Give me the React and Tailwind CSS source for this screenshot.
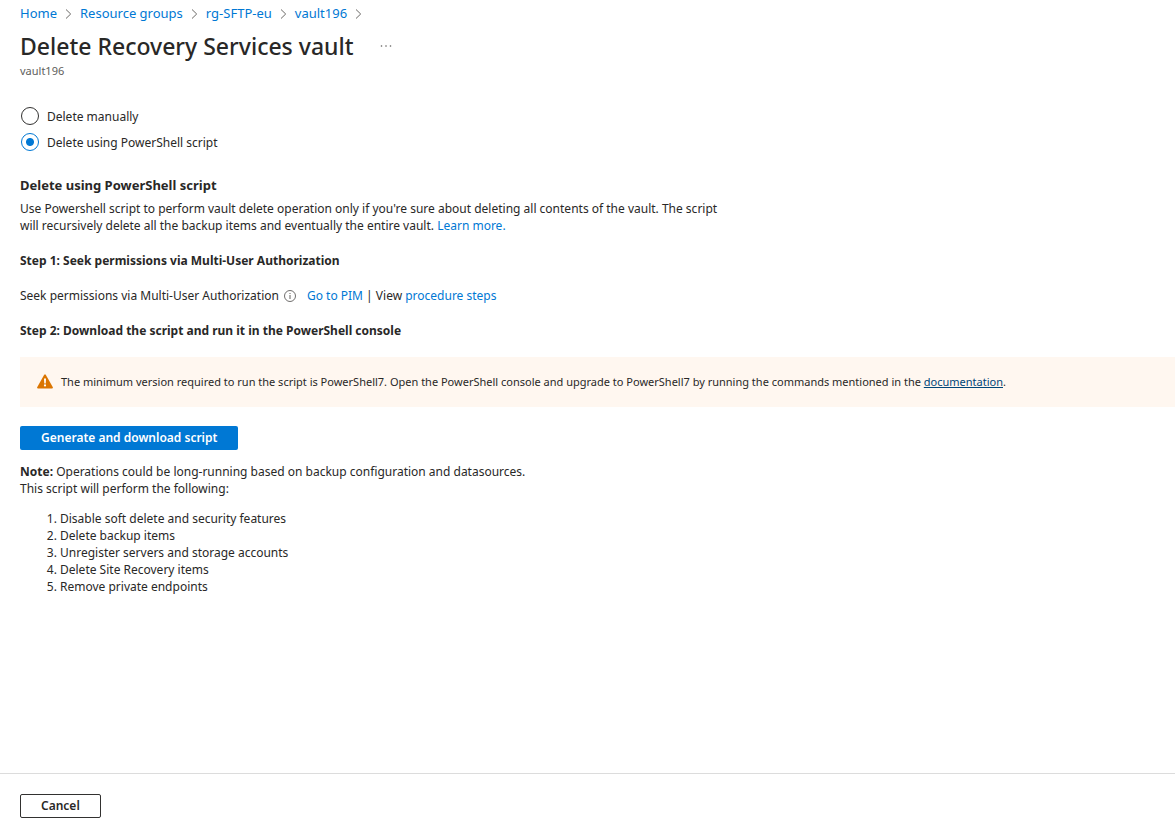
import { useState } from "react";

const crumbs = ["Home", "Resource groups", "rg-SFTP-eu", "vault196"];

const actions = [
  "Disable soft delete and security features",
  "Delete backup items",
  "Unregister servers and storage accounts",
  "Delete Site Recovery items",
  "Remove private endpoints",
];

const link = "text-[#0078d4] hover:underline";

function Chevron() {
  return (
    <svg className="mx-2 h-[10px] w-[7px]" viewBox="0 0 7 10" fill="none" stroke="#6b6967" aria-hidden="true">
      <path d="M1 0.5 5.7 5 1 9.5" />
    </svg>
  );
}

function InfoIcon() {
  return (
    <svg className="ml-[5px] mr-[11px] h-3 w-3" viewBox="0 0 12 12" fill="none" stroke="#605e5c" aria-hidden="true">
      <circle cx="6" cy="6" r="5.5" strokeWidth="0.9" />
      <path d="M6 5v4M6 3v1" strokeWidth="1" />
    </svg>
  );
}

function WarningIcon() {
  return (
    <svg className="mb-[2px] mr-2 h-[15px] w-4 shrink-0" viewBox="0 0 16 15" aria-hidden="true">
      <path
        d="M7.1 1.1Q8-.4 8.9 1.1L15.7 13Q16.500 14.500 14.900 14.500H1.100Q-.5 14.500.3 13Z"
        fill="#db7500"
      />
      <path d="M7 4.500h2l-.3 5H7.300Z" fill="#fff" />
      <circle cx="8" cy="11.400" r="1.100" fill="#fff" />
    </svg>
  );
}

function Radio({ label, value, selected, onSelect }) {
  return (
    <label className="flex h-[26px] items-center gap-2">
      <input
        type="radio"
        name="mode"
        value={value}
        checked={selected === value}
        onChange={() => onSelect(value)}
        className="m-0 h-[18px] w-[18px] shrink-0 appearance-none rounded-full border border-[#323130] bg-white checked:border-[#0078d4] checked:bg-[radial-gradient(circle,#0078d4_0_3.500px,transparent_4.500px)]"
      />
      {label}
    </label>
  );
}

export default function App() {
  const [mode, setMode] = useState("script");
  return (
    <div className="flex min-h-screen flex-col bg-white font-['Noto_Sans','Open_Sans',sans-serif] text-[12px] leading-[17px] text-[#292827]">
      <header className="pl-5">
        <nav aria-label="Breadcrumb" className="flex h-[27px] items-center text-[13px]">
          {crumbs.map((c) => (
            <span key={c} className="flex items-center">
              <a href="#" className={link}>{c}</a>
              <Chevron />
            </span>
          ))}
        </nav>
        <div className="flex h-[38px] items-center gap-6">
          <h1 className="text-[23px] font-medium leading-8">Delete Recovery Services vault</h1>
          <button type="button" aria-label="More actions" className="flex h-5 w-4 items-center justify-center">
            <svg className="h-[2px] w-3" viewBox="0 0 12 2" fill="#605e5c" aria-hidden="true">
              <circle cx="1.500" cy="1" r="0.8" />
              <circle cx="6" cy="1" r="0.8" />
              <circle cx="10.500" cy="1" r="0.8" />
            </svg>
          </button>
        </div>
        <p className="-mt-[2px] text-[11px] leading-4 text-[#605e5c]">vault196</p>
      </header>

      <main className="grow pl-5 pt-6">
        <div role="radiogroup" aria-label="Deletion method" className="pl-px">
          <Radio label="Delete manually" value="manual" selected={mode} onSelect={setMode} />
          <Radio label="Delete using PowerShell script" value="script" selected={mode} onSelect={setMode} />
        </div>

        <h2 className="mt-[22px] text-[13px] font-bold">Delete using PowerShell script</h2>
        <p className="mt-[6px] max-w-[710px]">
          Use Powershell script to perform vault delete operation only if you're sure about deleting all contents of
          the vault. The script will recursively delete all the backup items and eventually the entire vault.{" "}
          <a href="#" className={link}>Learn more.</a>
        </p>

        <h3 className="mt-[18px] font-bold">Step 1: Seek permissions via Multi-User Authorization</h3>
        <p className="mt-[18px] flex items-center">
          Seek permissions via Multi-User Authorization
          <InfoIcon />
          <span>
            <a href="#" className={link}>Go to PIM</a> | View <a href="#" className={link}>procedure steps</a>
          </span>
        </p>

        <h3 className="mt-[18px] font-bold">Step 2: Download the script and run it in the PowerShell console</h3>
        <div role="status" className="mt-[18px] flex min-h-[50px] items-center bg-[#fff7f0] pl-[17px] leading-4">
          <WarningIcon />
          <p className="text-[11px]">
            The minimum version required to run the script is PowerShell7. Open the PowerShell console and upgrade to
            PowerShell7 by running the commands mentioned in the{" "}
            <a href="#" className="text-[#004578] underline">documentation</a>.
          </p>
        </div>

        <button
          type="button"
          className="mt-[19px] block h-6 rounded-[2px] bg-[#0078d4] px-[21px] pb-[2px] font-semibold text-white"
        >
          Generate and download script
        </button>

        <p className="mt-[13px]">
          <strong>Note:</strong> Operations could be long-running based on backup configuration and datasources.
        </p>
        <p>This script will perform the following:</p>
        <ol className="mt-[13px] list-decimal pl-10">
          {actions.map((a) => (
            <li key={a}>{a}</li>
          ))}
        </ol>
      </main>

      <footer className="flex h-[59px] items-center border-t border-[#dcdcdc] pl-5 pt-[6px]">
        <button
          type="button"
          className="h-6 rounded-[2px] border border-[#323130] bg-white px-5 pb-[2px] font-semibold"
        >
          Cancel
        </button>
      </footer>
    </div>
  );
}
